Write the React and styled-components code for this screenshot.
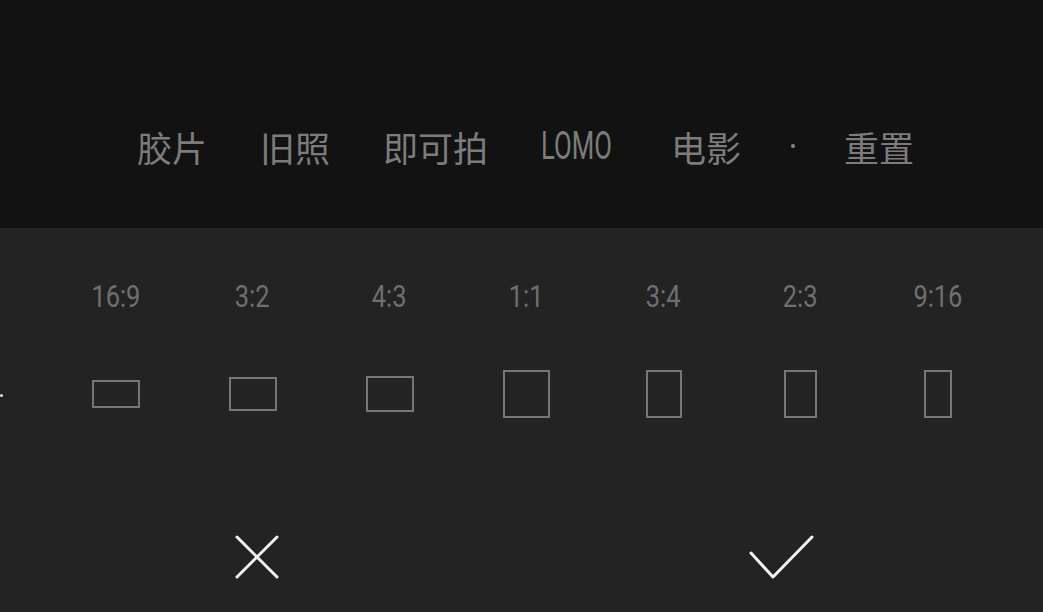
import styled, { createGlobalStyle } from "styled-components";

const Global = createGlobalStyle`
  html, body {
    margin: 0;
    padding: 0;
    background: #232323;
    overflow: hidden;
  }
`;

const ratios = [
  { label: "16:9", w: 48, h: 28 },
  { label: "3:2", w: 48, h: 34 },
  { label: "4:3", w: 48, h: 36 },
  { label: "1:1", w: 47, h: 48 },
  { label: "3:4", w: 36, h: 48 },
  { label: "2:3", w: 33, h: 48 },
  { label: "9:16", w: 28, h: 48 },
];

const App = () => {
  return (
    <>
      <Global />
      <Screen>
        <TopBar>
          <Menu>
            <MenuItem>胶片</MenuItem>
            <MenuItem>旧照</MenuItem>
            <MenuItem>即可拍</MenuItem>
            <MenuItem $latin>
              <span>LOMO</span>
            </MenuItem>
            <MenuItem>电影</MenuItem>
            <Dot />
            <MenuItem>重置</MenuItem>
          </Menu>
        </TopBar>
        <Panel>
          <RatioRow>
            <Ratio>
              <Label />
              <Frame $edge>
                <EdgeDot />
              </Frame>
            </Ratio>
            {ratios.map((r) => (
              <Ratio key={r.label}>
                <Label>
                  <span>{r.label}</span>
                </Label>
                <Frame>
                  <Shape $w={r.w} $h={r.h} />
                </Frame>
              </Ratio>
            ))}
          </RatioRow>
          <Actions>
            <Action aria-label="取消" $nudge={8}>
              <svg width="44" height="44" viewBox="0 0 44 44" fill="none">
                <path
                  d="M2 2 L42 42 M42 2 L2 42"
                  stroke="#f2f2f2"
                  strokeWidth="3"
                  strokeLinecap="round"
                />
              </svg>
            </Action>
            <Action aria-label="确定" $nudge={2}>
              <svg width="65" height="44" viewBox="0 0 65 44" fill="none">
                <path
                  d="M2 18 L24 42 L63 2"
                  stroke="#f2f2f2"
                  strokeWidth="3"
                  strokeLinecap="round"
                  strokeLinejoin="round"
                />
              </svg>
            </Action>
          </Actions>
        </Panel>
      </Screen>
    </>
  );
};

export default App;

const Screen = styled.div`
  width: 1043px;
  height: 612px;
  display: flex;
  flex-direction: column;
  background: #232323;
`;

const TopBar = styled.div`
  height: 228px;
  flex: none;
  background: #121212;
  display: flex;
  align-items: center;
  padding: 64px 0 0 137px;
  box-sizing: border-box;
`;

const Menu = styled.div`
  display: flex;
  align-items: center;
  gap: 53px;
`;

const MenuItem = styled.div`
  font-family: "Noto Sans CJK SC", "Noto Sans", sans-serif;
  font-size: 35px;
  line-height: 35px;
  color: #7c7c7c;
  white-space: nowrap;

  ${(p) =>
    p.$latin &&
    `
    width: 77px;
    font-family: Roboto, "Liberation Sans", sans-serif;
    font-weight: 400;
    font-size: 39px;
    span {
      display: inline-block;
      transform: scaleX(0.66);
      transform-origin: left center;
    }
  `}
`;

const Dot = styled.span`
  width: 4px;
  height: 4px;
  border-radius: 50%;
  background: #8a8a8a;
  margin: 0 -4px 0 -3px;
`;

const Panel = styled.div`
  flex: 1;
  display: flex;
  flex-direction: column;
  padding-top: 54px;
`;

const RatioRow = styled.div`
  display: grid;
  grid-template-columns: 47px repeat(7, 137px);
`;

const Ratio = styled.div`
  display: flex;
  flex-direction: column;
  align-items: center;
  gap: 58px;
`;

const Label = styled.div`
  height: 30px;
  line-height: 30px;
  font-family: Roboto, "Liberation Sans", sans-serif;
  font-size: 31px;
  color: #6f6f6f;
  span {
    display: inline-block;
    transform: scaleX(0.82);
  }
`;

const Frame = styled.div`
  height: 48px;
  width: ${(p) => (p.$edge ? "47px" : "auto")};
  display: flex;
  align-items: center;
  justify-content: ${(p) => (p.$edge ? "flex-start" : "center")};
`;

const Shape = styled.div`
  width: ${(p) => p.$w}px;
  height: ${(p) => p.$h}px;
  box-sizing: border-box;
  border: 2px solid #767676;
`;

const EdgeDot = styled.span`
  width: 3px;
  height: 3px;
  margin-top: 3px;
  background: #e6e6e6;
  border-radius: 50%;
`;

const Actions = styled.div`
  margin-top: auto;
  height: 110px;
  display: flex;
`;

const Action = styled.div`
  flex: 1;
  display: flex;
  align-items: center;
  justify-content: center;

  & > svg {
    margin-right: ${(p) => p.$nudge || 0}px;
  }
`;
